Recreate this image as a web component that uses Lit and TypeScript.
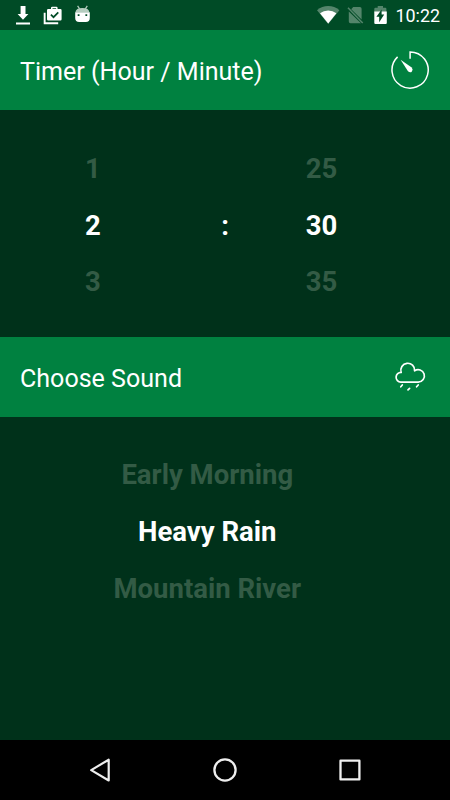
import { LitElement, html, css } from "lit";
import { customElement, property } from "lit/decorators.js";
import { classMap } from "lit/directives/class-map.js";

@customElement("status-bar")
class StatusBar extends LitElement {
  static styles = css`
    :host { display: flex; justify-content: space-between; height: 30px; background: #004b26; color: #fff; }
    svg { display: block; }
    .time { width: 55px; box-sizing: border-box; padding-right: 10px; font-size: 17.900px; line-height: 31px; text-align: right; white-space: nowrap; }
    .right { display: flex; }
  `;
  render() {
    return html`
      <svg width="110" height="30" viewBox="0 0 110 30" fill="#fff">
        <path d="M20.600 6h4.900v8h2.900l-5.400 5.700-5.400-5.700h3zM16 22.500h14v2H16z" />
        <path d="M43.700 12.700h1.900v9.500h12.600v2H43.700z" />
        <path fill-rule="evenodd" d="M47 10.200q0-1.200 1.200-1.200H51V8q0-1.200 1.200-1.200h4.200Q57.600 6.800 57.600 8v1h2.800q1.200 0 1.200 1.200v9q0 1.200-1.200 1.200H48.200q-1.200 0-1.200-1.200zM52.500 8.200V9h3.600v-.8z" />
        <path d="M50.900 14.700l2.600 2.500 4.800-4.800" fill="none" stroke="#004b26" stroke-width="1.700" />
        <path d="M77.600 5.800l2 3M87.300 5.800l-2 3" stroke="#b5cdbf" stroke-width="1.200" />
        <path fill="#b5cdbf" d="M75.400 12.300q.4-4.300 7-4.300t7 4.300z" />
        <path fill-rule="evenodd" d="M75.200 12.300h14.600v5.700q0 4-4 4h-6.600q-4 0-4-4zM77.700 14.200v1.800h1.800v-1.800zM85.400 14.200v1.800h1.800v-1.800z" />
      </svg>
      <div class="right">
        <svg width="95" height="30" viewBox="300 0 95 30" fill="#fff">
          <path fill="#54856b" d="M317 10.200Q322 6 328.200 6t11.200 4.200L328.200 23.900z" />
          <path d="M320 13.200q3.600-2.700 8.200-2.700t8.200 2.700L328.200 23.400z" />
          <path fill="#54856b" d="M351.200 9.300l2-2.300h6.700q1.700 0 1.700 1.700v10.900zM348.800 11.500L361 23.300h-10.500q-1.700 0-1.700-1.700z" />
          <path d="M348 7.800L362.700 23" stroke="#54856b" stroke-width="1.500" />
          <path fill="#54856b" d="M374.300 12.600V8.900q0-1.100 1.100-1.100h2.300V6h5.300v1.800h2.300q1.100 0 1.100 1.100v3.700z" />
          <path d="M374.300 11.500h12.500v11.400q0 1.100-1.100 1.100h-10.300q-1.100 0-1.100-1.100z" />
          <path fill="#004b26" d="M381.600 9.500v5h2.600l-5 7.700v-5.400h-2.800z" />
        </svg>
        <div class="time">10:22</div>
      </div>
    `;
  }
}

@customElement("section-header")
class SectionHeader extends LitElement {
  @property() heading = "";
  static styles = css`
    :host { display: flex; align-items: center; justify-content: space-between; height: 80px; padding: 0 20px; box-sizing: border-box; background: #008140; color: #fff; }
    .title { font-size: 25.050px; line-height: 30px; padding-top: 3px; white-space: nowrap; }
  `;
  render() {
    return html`<div class="title">${this.heading}</div><slot></slot>`;
  }
}

@customElement("wheel-picker")
class WheelPicker extends LitElement {
  @property({ type: Array }) items: string[] = [];
  static styles = css`
    :host { display: grid; grid-auto-rows: 56.700px; justify-items: center; font-size: 27.500px; font-weight: 700; color: #335b45; }
    .item { line-height: 57px; white-space: nowrap; }
    .selected { color: #fff; }
  `;
  render() {
    return this.items.map(
      (item, i) => html`<div class=${classMap({ item: true, selected: i === 1 })}>${item}</div>`
    );
  }
}

@customElement("nav-bar")
class NavBar extends LitElement {
  static styles = css`
    :host { display: flex; align-items: center; justify-content: center; gap: 95px; height: 60px; background: #000; }
    svg { display: block; }
  `;
  render() {
    return html`
      <svg width="30" height="30" viewBox="0 0 30 30" fill="none" stroke="#eee" stroke-width="2.200" stroke-linejoin="round"><path d="M23.700 4.700v20.800L6.200 15.100z" /></svg>
      <svg width="30" height="30" viewBox="0 0 30 30" fill="none" stroke="#eee" stroke-width="2.300"><circle cx="15" cy="15" r="10.600" /></svg>
      <svg width="30" height="30" viewBox="0 0 30 30" fill="none" stroke="#eee" stroke-width="2.300" stroke-linejoin="round"><path d="M5.500 5.700h18.900v18.700H5.500z" /></svg>
    `;
  }
}

@customElement("app-root")
class AppRoot extends LitElement {
  static styles = css`
    :host { display: flex; flex-direction: column; width: 450px; height: 800px; overflow: hidden; background: #00311a; font-family: Roboto, sans-serif; }
    .timer { display: grid; grid-template-columns: 186px 78px 115px; height: 227px; box-sizing: border-box; padding-top: 30px; }
    .colon { color: #fff; font-size: 27.500px; font-weight: 700; line-height: 171px; text-align: center; }
    .sound { flex: 1; padding: 29.400px 35.500px 0 0; }
    .icon { display: block; flex: none; }
  `;
  render() {
    return html`
      <status-bar></status-bar>
      <section-header heading="Timer (Hour / Minute)">
        <svg class="icon" width="40" height="40" viewBox="390 50 40 40" fill="none" stroke="#fff" stroke-width="1.500">
          <path d="M410.100 58.800V51.900A18.100 18.100 0 1 1 397.600 56.900" />
          <path fill="#fff" stroke="none" d="M400.600 59.700L411.700 67.600Q413.500 69.600 411.900 71.400T408 71.200z" />
        </svg>
      </section-header>
      <div class="timer">
        <wheel-picker .items=${["1", "2", "3"]}></wheel-picker>
        <div class="colon">:</div>
        <wheel-picker .items=${["25", "30", "35"]}></wheel-picker>
      </div>
      <section-header heading="Choose Sound">
        <svg class="icon" width="40" height="40" viewBox="390 357 40 40" fill="none" stroke="#fff" stroke-width="1.700" stroke-linecap="round" stroke-linejoin="round">
          <path d="M400.800 382.200H418.200A6.250 6.250 0 1 0 414.600 370.800A6.900 6.900 0 1 0 401.200 372.400A4.900 4.900 0 0 0 400.800 382.200z" />
          <path d="M402.300 385l-1.500 1.800M409.600 388.300l-1.600 1.600M418.200 385l-1.600 1.800" />
        </svg>
      </section-header>
      <div class="sound">
        <wheel-picker .items=${["Early Morning", "Heavy Rain", "Mountain River"]}></wheel-picker>
      </div>
      <nav-bar></nav-bar>
    `;
  }
}
